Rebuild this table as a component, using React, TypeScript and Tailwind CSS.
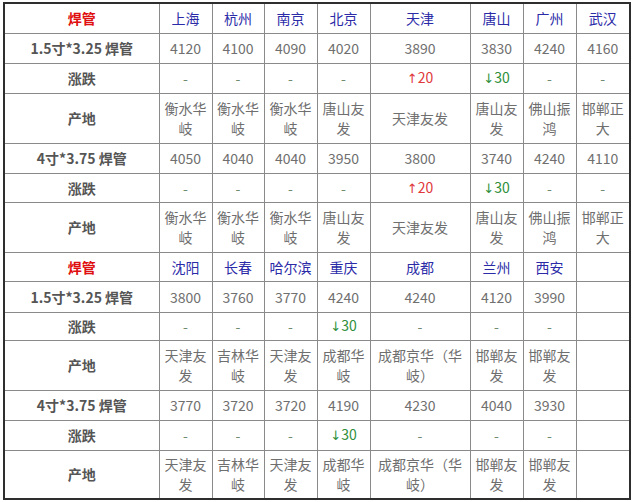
import React from "react";

type Cell = { t: string; kind?: "num" | "up" | "down" | "dash" | "text" | "city" | "empty" };

const widths = ["w-[155px]", "w-[53px]", "w-[52px]", "w-[53px]", "w-[53px]", "w-[100px]", "w-[53px]", "w-[53px]", "w-[54px]"];

function cls(kind?: Cell["kind"]) {
  switch (kind) {
    case "city":
      return "text-[#2b2ba8]";
    case "up":
      return "text-[#e0383a]";
    case "down":
      return "text-[#2f8f3a]";
    case "dash":
      return "text-[#6f8a6f]";
    default:
      return "text-[#6f6f6f]";
  }
}

function Content({ c }: { c: Cell }) {
  if (c.kind === "up" || c.kind === "down") {
    return (
      <>
        <span style={{ fontFamily: '"DejaVu Sans", sans-serif' }} className="text-[13px]">
          {c.kind === "up" ? "↑" : "↓"}
        </span>
        {c.t}
      </>
    );
  }
  return <>{c.t}</>;
}

function Row({ label, labelKind, cells, h }: { label: string; labelKind: "head" | "bold"; cells: Cell[]; h: string }) {
  return (
    <tr className={h}>
      <td
        className={
          "border border-[#8a8a8a] text-center align-middle font-bold " +
          (labelKind === "head" ? "text-[#e00f0f]" : "text-[#555555]")
        }
      >
        {label}
      </td>
      {cells.map((c, i) => (
        <td key={i} className={"border border-[#8a8a8a] px-[3px] text-center align-middle " + cls(c.kind)}>
          <Content c={c} />
        </td>
      ))}
    </tr>
  );
}

const city = (t: string): Cell => ({ t, kind: "city" });
const num = (t: string): Cell => ({ t, kind: "num" });
const dash: Cell = { t: "-", kind: "dash" };
const up = (t: string): Cell => ({ t, kind: "up" });
const down = (t: string): Cell => ({ t, kind: "down" });
const txt = (t: string): Cell => ({ t, kind: "text" });
const empty: Cell = { t: "", kind: "empty" };

export default function App() {
  return (
    <div className="w-[632px] h-[502px] bg-white pl-[3px] pt-[2px]" style={{ fontFamily: '"Noto Sans CJK SC", "Noto Sans", sans-serif' }}>
      <table className="table-fixed border-collapse w-[627px] text-[14px] leading-[20px] border-2 border-[#2e2e2e]">
        <colgroup>
          {widths.map((w, i) => (
            <col key={i} className={w} />
          ))}
        </colgroup>
        <tbody>
          <Row h="h-[30px]" label="焊管" labelKind="head" cells={["上海", "杭州", "南京", "北京", "天津", "唐山", "广州", "武汉"].map(city)} />
          <Row h="h-[30px]" label="1.5寸*3.25 焊管" labelKind="bold" cells={["4120", "4100", "4090", "4020", "3890", "3830", "4240", "4160"].map(num)} />
          <Row h="h-[30px]" label="涨跌" labelKind="bold" cells={[dash, dash, dash, dash, up("20"), down("30"), dash, dash]} />
          <Row h="h-[50px]" label="产地" labelKind="bold" cells={["衡水华岐", "衡水华岐", "衡水华岐", "唐山友发", "天津友发", "唐山友发", "佛山振鸿", "邯郸正大"].map(txt)} />
          <Row h="h-[30px]" label="4寸*3.75 焊管" labelKind="bold" cells={["4050", "4040", "4040", "3950", "3800", "3740", "4240", "4110"].map(num)} />
          <Row h="h-[29px]" label="涨跌" labelKind="bold" cells={[dash, dash, dash, dash, up("20"), down("30"), dash, dash]} />
          <Row h="h-[50px]" label="产地" labelKind="bold" cells={["衡水华岐", "衡水华岐", "衡水华岐", "唐山友发", "天津友发", "唐山友发", "佛山振鸿", "邯郸正大"].map(txt)} />
          <Row h="h-[29px]" label="焊管" labelKind="head" cells={[...["沈阳", "长春", "哈尔滨", "重庆", "成都", "兰州", "西安"].map(city), empty]} />
          <Row h="h-[31px]" label="1.5寸*3.25 焊管" labelKind="bold" cells={[...["3800", "3760", "3770", "4240", "4240", "4120", "3990"].map(num), empty]} />
          <Row h="h-[28px]" label="涨跌" labelKind="bold" cells={[dash, dash, dash, down("30"), dash, dash, dash, empty]} />
          <Row h="h-[50px]" label="产地" labelKind="bold" cells={[...["天津友发", "吉林华岐", "天津友发", "成都华岐", "成都京华（华岐）", "邯郸友发", "邯郸友发"].map(txt), empty]} />
          <Row h="h-[30px]" label="4寸*3.75 焊管" labelKind="bold" cells={[...["3770", "3720", "3720", "4190", "4230", "4040", "3930"].map(num), empty]} />
          <Row h="h-[30px]" label="涨跌" labelKind="bold" cells={[dash, dash, dash, down("30"), dash, dash, dash, empty]} />
          <Row h="h-[49px]" label="产地" labelKind="bold" cells={[...["天津友发", "吉林华岐", "天津友发", "成都华岐", "成都京华（华岐）", "邯郸友发", "邯郸友发"].map(txt), empty]} />
        </tbody>
      </table>
    </div>
  );
}
